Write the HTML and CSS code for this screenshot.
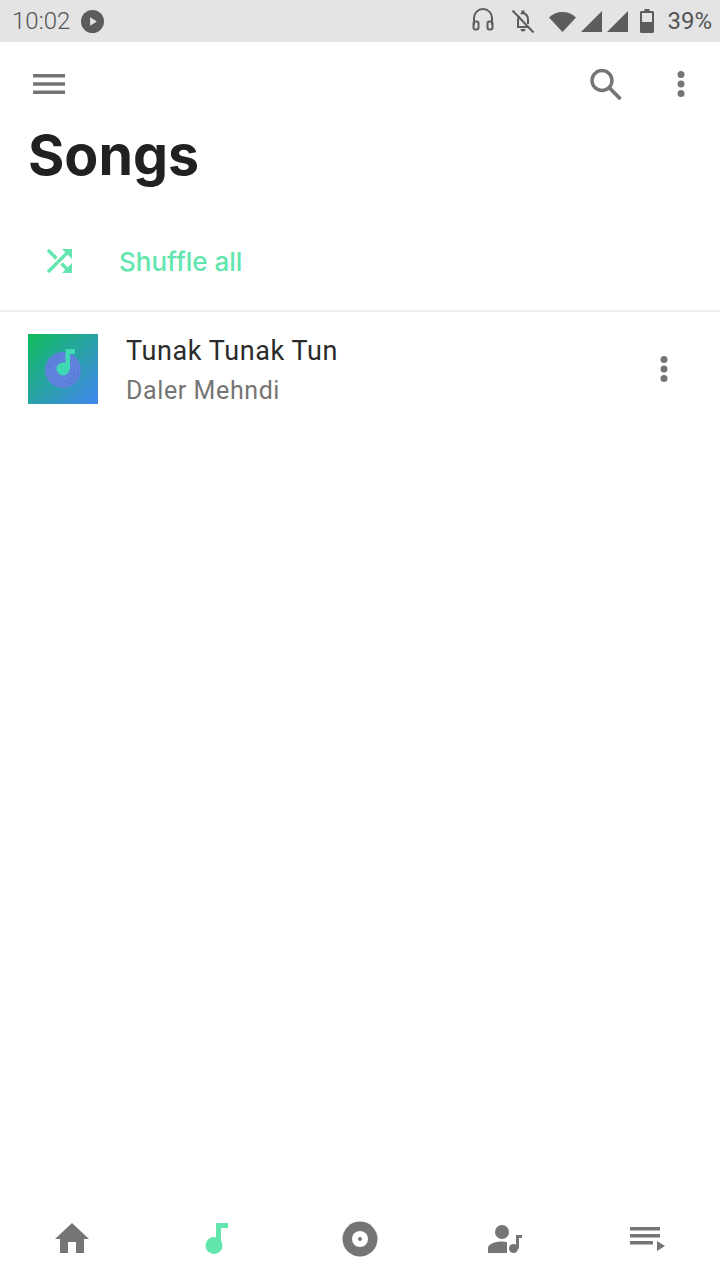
FILE: index.html
```html
<!DOCTYPE html>
<html lang="en">
<head>
<meta charset="utf-8">
<title>Songs</title>
<link rel="stylesheet" href="styles.css">
</head>
<body>
<div class="app">
  <header class="status">
    <div class="status-left">
      <span class="time">10:02</span>
      <svg class="ic-play" viewBox="0 0 24 24"><circle cx="12" cy="12" r="12" fill="#5c5c5c"/><path d="M9.500 7.500l7 4.500-7 4.500z" fill="#e4e4e4"/></svg>
    </div>
    <div class="status-right">
      <svg class="ic-head" viewBox="0 0 22 24"><path d="M2 17v-7a9 9 0 0 1 18 0v7" fill="none" stroke="#5c5c5c" stroke-width="2"/><rect x="1.500" y="13.500" width="5" height="8" rx="2" fill="none" stroke="#5c5c5c" stroke-width="2"/><rect x="15.500" y="13.500" width="5" height="8" rx="2" fill="none" stroke="#5c5c5c" stroke-width="2"/></svg>
      <svg class="ic-bell" viewBox="0 0 24 24"><path d="M6 18h11M7 18v-7c0-2 .5-3 1.500-4M10 5c.5-.6 1-1 2-1s1.500.4 2 1c2 1 3 3 3 6v4" fill="none" stroke="#5c5c5c" stroke-width="2"/><rect x="10.500" y="1.500" width="3" height="3" fill="#5c5c5c"/><path d="M9.500 20h5a2.500 2.500 0 0 1-5 0z" fill="#5c5c5c"/><path d="M1.500 1.500l21 22" stroke="#5c5c5c" stroke-width="2"/></svg>
      <svg class="ic-wifi" viewBox="0 0 27 21"><path d="M0 6.500C3.500 3 8 1 13.500 1S23.500 3 27 6.500L13.500 21z" fill="#5c5c5c"/></svg>
      <svg class="ic-signal" viewBox="0 0 21 21"><path d="M21 0v21H0z" fill="#5c5c5c"/></svg>
      <svg class="ic-signal second" viewBox="0 0 21 21"><path d="M21 0v21H0z" fill="#5c5c5c"/></svg>
      <svg class="ic-batt" viewBox="0 0 14 24"><path d="M4.500 0h5v2h3A1.500 1.500 0 0 1 14 3.500v19a1.500 1.500 0 0 1-1.500 1.500h-11A1.500 1.500 0 0 1 0 22.500v-19A1.500 1.500 0 0 1 1.500 2h3z" fill="#5c5c5c"/><rect x="2" y="4" width="10" height="9" fill="#e4e4e4"/></svg>
      <span class="pct">39%</span>
    </div>
  </header>

  <div class="toolbar">
    <svg class="ic-menu" viewBox="0 0 32 20"><path d="M0 0h32v3.600H0zM0 8.200h32v3.600H0zM0 16.400h32V20H0z" fill="#757575"/></svg>
    <div class="toolbar-right">
      <svg class="ic-search" viewBox="0 0 32 32"><circle cx="12" cy="11.500" r="10" fill="none" stroke="#757575" stroke-width="3.400"/><path d="M19.500 19L30.500 30" stroke="#757575" stroke-width="3.800"/></svg>
      <svg class="ic-dots" viewBox="0 0 8 26"><circle cx="4" cy="3.500" r="3.500" fill="#757575"/><circle cx="4" cy="13" r="3.500" fill="#757575"/><circle cx="4" cy="22.500" r="3.500" fill="#757575"/></svg>
    </div>
  </div>

  <h1 class="title">Songs</h1>

  <div class="shuffle">
    <svg class="ic-shuffle" viewBox="0 0 25 24"><path d="M1 1l8.500 8.500M1 23L21 3M14.500 14.500L22 22" fill="none" stroke="#62e6ae" stroke-width="3.400"/><path d="M15 0h10v10zM25 24H15l10-10z" fill="#62e6ae"/></svg>
    <span class="shuffle-label">Shuffle all</span>
  </div>

  <div class="song">
    <div class="art">
      <svg class="art-icon" viewBox="0 0 70 70">
        <circle cx="35" cy="36" r="18" fill="#5f82dc"/>
        <path d="M23 36a12 12 0 0 1 10-12M47 36a12 12 0 0 1-10 12M19.500 36a15.500 15.500 0 0 1 12-15M50.500 36a15.500 15.500 0 0 1-12 15" fill="none" stroke="#5878d0" stroke-width="1"/>
        <circle cx="35" cy="35" r="6.500" fill="#3fd9b4"/>
        <path d="M37.500 15h9.500v5h-5V35h-4.500z" fill="#3fd9b4"/>
      </svg>
    </div>
    <div class="song-text">
      <div class="song-name">Tunak Tunak Tun</div>
      <div class="song-artist">Daler Mehndi</div>
    </div>
    <svg class="ic-dots song-dots" viewBox="0 0 8 26"><circle cx="4" cy="3.500" r="3.500" fill="#757575"/><circle cx="4" cy="13" r="3.500" fill="#757575"/><circle cx="4" cy="22.500" r="3.500" fill="#757575"/></svg>
  </div>

  <nav class="nav">
    <div class="nav-item"><svg class="ic-nav" viewBox="0 0 36 36"><path d="M18 2L35 18H30V32H22V21H14V32H6V18H1z" fill="#757575"/></svg></div>
    <div class="nav-item"><svg class="ic-nav" viewBox="0 0 36 36"><circle cx="16" cy="24.500" r="8.500" fill="#62e6ae"/><path d="M18 2H30V7H23V25H18z" fill="#62e6ae"/></svg></div>
    <div class="nav-item"><svg class="ic-nav" viewBox="0 0 36 36"><circle cx="18" cy="18" r="17.500" fill="#757575"/><circle cx="18" cy="18" r="8" fill="#fff"/><circle cx="18" cy="18" r="2" fill="#757575"/></svg></div>
    <div class="nav-item"><svg class="ic-nav" viewBox="0 0 36 36"><circle cx="16" cy="11" r="7" fill="#757575"/><path d="M2 32v-5c0-4 7-6.500 14-6.500 2 0 3.500.2 5 .5v11z" fill="#757575"/><circle cx="27.500" cy="27.500" r="4.500" fill="#757575"/><path d="M30 27.500V14h6v3h-3v10.500z" fill="#757575"/></svg></div>
    <div class="nav-item"><svg class="ic-nav" viewBox="0 0 36 36"><path d="M0 6h30v3.500H0zM0 13h30v3.500H0zM0 20h23v3.500H0z" fill="#757575"/><path d="M27 20l8 5-8 5z" fill="#757575"/></svg></div>
  </nav>
</div>
</body>
</html>
```
FILE: styles.css
```css
* { box-sizing: border-box; }
html, body { margin: 0; padding: 0; background: #fff; }
.app { width: 720px; height: 1280px; display: flex; flex-direction: column; font-family: Inter, "Liberation Sans", sans-serif; overflow: hidden; }
svg { display: block; flex: none; }

.status { height: 42px; background: #e4e4e4; display: flex; justify-content: space-between; align-items: center; padding: 0 8px 0 12px; color: #555; font-family: Roboto, sans-serif; font-size: 24px; }
.status-left { display: flex; align-items: center; gap: 11px; }
.status-right { display: flex; align-items: center; }
.time { font-weight: 300; }
.pct { margin-left: 13px; font-weight: 400; }
.ic-play { width: 23px; height: 23px; }
.ic-head { width: 22px; height: 24px; margin-bottom: 3px; }
.ic-bell { width: 24px; height: 24px; margin-left: 17px; }
.ic-wifi { width: 27px; height: 21px; margin-left: 14px; }
.ic-signal { width: 21px; height: 21px; margin-left: 5px; }
.ic-batt { width: 14px; height: 24px; margin-left: 12px; margin-bottom: 1px; }

.toolbar { display: flex; justify-content: space-between; align-items: flex-start; padding: 27px 35px 0 33px; height: 84px; }
.toolbar-right { display: flex; align-items: flex-start; gap: 55px; }
.ic-menu { width: 32px; height: 20px; margin-top: 5px; }
.ic-search { width: 32px; height: 32px; }
.ic-dots { width: 8px; height: 26px; }
.toolbar-right .ic-dots { margin-top: 2px; }

.title { margin: 0; padding-left: 28px; font-size: 55.5px; line-height: 58px; font-weight: 700; color: #212121; height: 58px; }

.shuffle { display: flex; align-items: center; height: 128px; padding: 28px 0 0 47px; border-bottom: 2px solid #ececec; }
.ic-shuffle { width: 25px; height: 24px; }
.shuffle-label { margin-left: 47px; color: #62e6ae; font-size: 26px; font-weight: 500; }

.song { display: flex; align-items: flex-start; padding: 22px 52px 0 28px; }
.art { width: 70px; height: 70px; background: linear-gradient(135deg, #10bd5c, #4286f0); }
.art-icon { width: 70px; height: 70px; }
.song-text { flex: 1; margin-left: 28px; }
.song-name { font-family: Roboto, sans-serif; font-size: 27px; line-height: 34px; color: #2b2b2b; letter-spacing: 0.6px; }
.song-artist { font-family: Roboto, sans-serif; font-size: 25px; line-height: 34px; margin-top: 6px; color: #757575; letter-spacing: 0.6px; }
.song-dots { margin-top: 22px; }

.nav { margin-top: auto; display: flex; height: 59px; }
.nav-item { flex: 1; display: flex; justify-content: center; align-items: flex-start; }
.ic-nav { width: 36px; height: 36px; }
```
